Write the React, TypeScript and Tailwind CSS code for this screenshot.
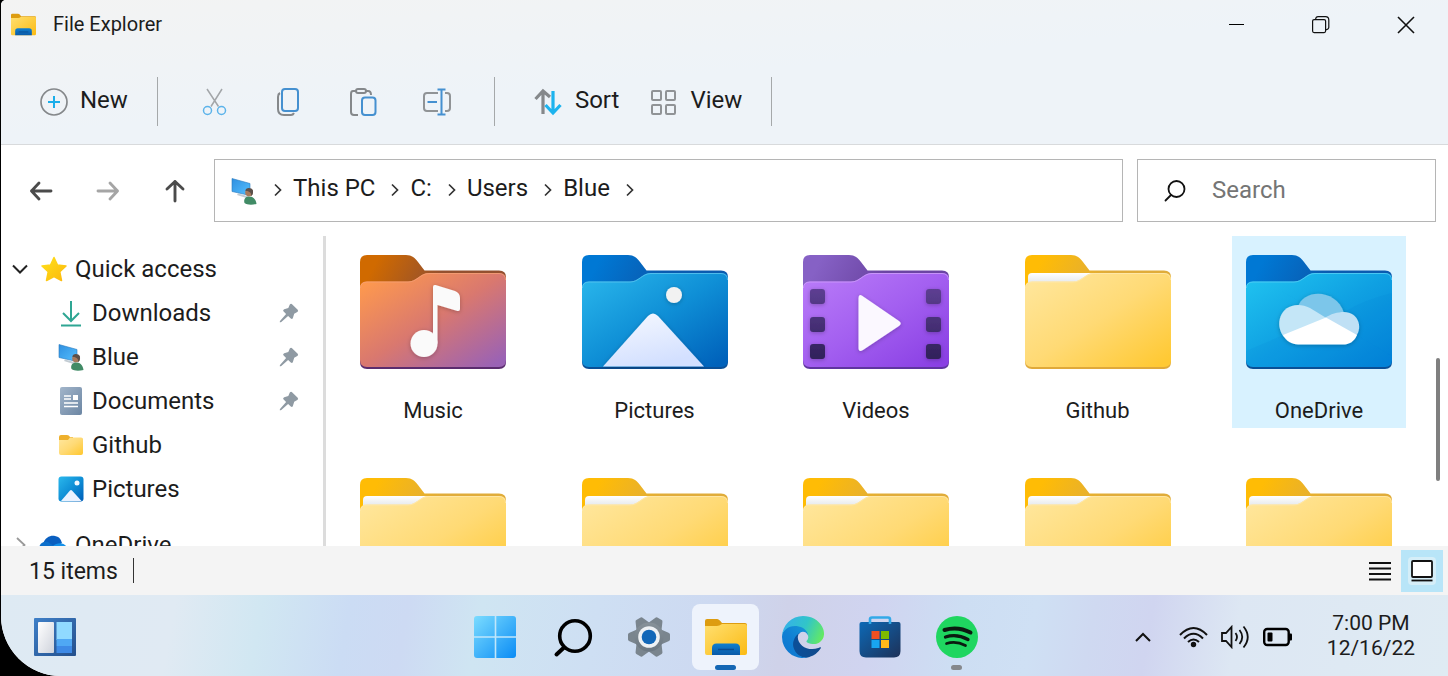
import type { ReactNode } from "react";

type FolderKind = "music" | "pictures" | "videos" | "plain" | "onedrive";

interface Shade {
  back: [string, string];
  front: [string, string, string];
  edge: string;
  rim: string;
}

const shades: Record<FolderKind, Shade> = {
  music: {
    back: ["#d06a00", "#94502f"],
    front: ["#ff9a4d", "#d9786f", "#9a62b5"],
    edge: "#5b2c6e",
    rim: "#f5a077",
  },
  pictures: {
    back: ["#0078d4", "#0a5bb0"],
    front: ["#28b4ea", "#0f8fd6", "#0062bb"],
    edge: "#0a4f96",
    rim: "#5cc6f0",
  },
  videos: {
    back: ["#8661c5", "#6b45a3"],
    front: ["#b87af8", "#a35ff0", "#8a40e4"],
    edge: "#5f35a0",
    rim: "#cf9ffb",
  },
  plain: {
    back: ["#ffbc05", "#e0ac3a"],
    front: ["#ffe69b", "#ffda75", "#ffc934"],
    edge: "#e0a93a",
    rim: "#ffe9ae",
  },
  onedrive: {
    back: ["#0078d4", "#0a5bb0"],
    front: ["#1fc1ef", "#0fa0e2", "#0384d8"],
    edge: "#0a4f96",
    rim: "#58d0f5",
  },
};

function FolderArt({ kind }: { kind: FolderKind }) {
  if (kind === "music") {
    return (
      <g fill="#fafafa">
        <circle cx="64" cy="88.500" r="13.500" />
        <path d="M73 32Q73 29.500 75.500 30L95 36Q100 38 100 43V54Q100 56.500 97.500 56L77.500 50V88.500H73Z" />
      </g>
    );
  }
  if (kind === "pictures") {
    return (
      <g>
        <circle cx="92" cy="40" r="8" fill="#f2f2f2" />
        <path
          d="M21 111.500L66 61Q71 56 76 61L122 111.500Z"
          fill="url(#mountain)"
        />
      </g>
    );
  }
  if (kind === "videos") {
    return (
      <g>
        <path
          d="M7 37q0-3 3-3h9q3 0 3 3v9q0 3-3 3h-9q-3 0-3-3zM7 65q0-3 3-3h9q3 0 3 3v9q0 3-3 3h-9q-3 0-3-3zM7 92q0-3 3-3h9q3 0 3 3v9q0 3-3 3h-9q-3 0-3-3zM123 37q0-3 3-3h9q3 0 3 3v9q0 3-3 3h-9q-3 0-3-3zM123 65q0-3 3-3h9q3 0 3 3v9q0 3-3 3h-9q-3 0-3-3zM123 92q0-3 3-3h9q3 0 3 3v9q0 3-3 3h-9q-3 0-3-3z"
          fill="url(#film)"
        />
        <path
          d="M55.500 43Q55.500 38.500 59.500 41L96 66Q99.500 68.500 96 71L60 95Q55.500 97.500 55.500 93Z"
          fill="#fbf8ff"
        />
      </g>
    );
  }
  if (kind === "onedrive") {
    return (
      <g>
        <path d="M52 52C57 34 90 33 98 58L80 66Z" fill="#7cc6ea" />
        <path d="M38 82C28 70 34 50 52 50C56 50 60 51 64 53L82 64Z" fill="#c4e6f7" />
        <path d="M79 63C84 59 92 57 98 57C112 57 117 72 110 81Z" fill="#bfe0f5" />
        <path d="M37 80L80 62.500L111 80C108 87 103 89.500 97 89.500H52C46 89.500 40 86 37 80Z" fill="#fff" />
      </g>
    );
  }
  return null;
}

function Folder({ kind }: { kind: FolderKind }) {
  const s = shades[kind];
  return (
    <svg viewBox="0 0 146 114" className="h-[114px] w-[146px]" aria-hidden="true">
      <defs>
        <linearGradient id={`back-${kind}`} gradientUnits="userSpaceOnUse" x1="20" y1="0" x2="75" y2="30">
          <stop offset="0" stopColor={s.back[0]} />
          <stop offset="1" stopColor={s.back[1]} />
        </linearGradient>
        <linearGradient id={`front-${kind}`} x1="0" y1="0.100" x2="0.900" y2="1">
          <stop offset="0" stopColor={s.front[0]} />
          <stop offset="0.500" stopColor={s.front[1]} />
          <stop offset="1" stopColor={s.front[2]} />
        </linearGradient>
        <linearGradient id="mountain" x1="0" y1="0" x2="0.400" y2="1">
          <stop offset="0" stopColor="#f7f9ff" />
          <stop offset="1" stopColor="#d3e0ff" />
        </linearGradient>
        <linearGradient id="film" x1="0" y1="0" x2="0" y2="1">
          <stop offset="0" stopColor="#5d3f92" />
          <stop offset="1" stopColor="#30205a" />
        </linearGradient>
        <linearGradient id="paper" x1="0" y1="0" x2="0" y2="1">
          <stop offset="0" stopColor="#ffffff" />
          <stop offset="1" stopColor="#dfe3e6" />
        </linearGradient>
        <filter id="soft" x="-20%" y="-20%" width="140%" height="140%">
          <feDropShadow dx="0" dy="1" stdDeviation="2" floodOpacity="0.250" />
        </filter>
      </defs>
      <path
        d="M0 7Q0 0 7 0H46C52 0 55 3 58 7L64.500 15.500H139Q146 15.500 146 22V60H0Z"
        fill={`url(#back-${kind})`}
      />
      <path d="M0 90H146V107Q146 114 139 114H7Q0 114 0 107Z" fill={s.edge} />
      {kind === "plain" && (
        <path d="M3 22Q3 18 7 18H69L60 30H3Z" fill="url(#paper)" />
      )}
      <path
        d="M0 33Q0 26.500 7 26.500H48C57 26.500 60 18 69 18H139Q146 18 146 25V105Q146 112 139 112H7Q0 112 0 105Z"
        fill={`url(#front-${kind})`}
      />
      {kind === "onedrive" && (
        <g>
          <path d="M20 27L146 101V105Q146 112 139 112H7Q0 112 0 105V96L80 62Z" fill="#0078d4" opacity="0.100" />
          <path d="M98 57Q120 44 146 38V101L80 62Z" fill="#0078d4" opacity="0.120" />
        </g>
      )}
      <path
        d="M0.500 33Q0.500 27 7 27H48C57 27 60 18.500 69 18.500H139Q145.500 18.500 145.500 25"
        fill="none"
        stroke={s.rim}
        strokeWidth="1"
        opacity="0.800"
      />
      <g filter="url(#soft)">
        <FolderArt kind={kind} />
      </g>
    </svg>
  );
}

function ExplorerIcon({ className }: { className: string }) {
  return (
    <svg viewBox="0 0 42 42" className={className} aria-hidden="true">
      <defs>
        <linearGradient id="exp-body" x1="0" y1="0" x2="1" y2="1">
          <stop offset="0" stopColor="#ffdf70" />
          <stop offset="1" stopColor="#fbbb14" />
        </linearGradient>
        <linearGradient id="exp-dock" x1="0" y1="0" x2="0" y2="1">
          <stop offset="0" stopColor="#0f7fd0" />
          <stop offset="1" stopColor="#0a5aa8" />
        </linearGradient>
      </defs>
      <path d="M0 5Q0 3 2 3H12Q14 3 17 7H40Q42 7 42 9V20H0Z" fill="#dd9c10" />
      <path d="M0 10H12Q14 10 17 8H40Q42 8 42 10V37Q42 39 40 39H2Q0 39 0 37Z" fill="url(#exp-body)" />
      <path d="M7 39V32Q7 27.500 11.500 27.500H30.500Q35 27.500 35 32V39Z" fill="url(#exp-dock)" />
      <path d="M13 33.500H29" stroke="#084c94" strokeWidth="1.500" />
    </svg>
  );
}

function UserPcIcon() {
  return (
    <svg viewBox="0 0 26 28" className="h-7 w-[26px]" aria-hidden="true">
      <defs>
        <linearGradient id="pc-screen" x1="0" y1="0" x2="1" y2="1">
          <stop offset="0" stopColor="#2f8fe0" />
          <stop offset="1" stopColor="#55c0ff" />
        </linearGradient>
      </defs>
      <path d="M7 16.500L18 19.500L17 21.500L6 18Z" fill="#c3ccd3" />
      <path d="M1 1.500L19 6.500V18.500L1 14.500Z" fill="url(#pc-screen)" stroke="#2a7bbd" strokeWidth="0.600" />
      <path d="M13.500 26C12 21 16 19 19 19.500C23 20 25 23 25.500 27C21 28 16 28 13.500 26Z" fill="#418b66" />
      <circle cx="18" cy="15.500" r="3.800" fill="#a87a5d" />
      <path d="M14.500 14C14 10.500 20.500 10 22 13.500C22.500 17 21 18.500 20 19C21 16 18 13.500 14.500 14Z" fill="#5b504a" />
    </svg>
  );
}

function Chevron() {
  return (
    <svg viewBox="0 0 8 14" className="mt-1 h-[14px] w-2" fill="none" stroke="#333" strokeWidth="1.700" aria-hidden="true">
      <path d="M1 1.500L6.500 7L1 12.500" />
    </svg>
  );
}

function NavArrow({ d, color }: { d: string; color: string }) {
  return (
    <svg viewBox="0 0 24 24" className="h-6 w-6" fill="none" stroke={color} strokeWidth="2.900" strokeLinecap="round" strokeLinejoin="round" aria-hidden="true">
      <path d={d} />
    </svg>
  );
}

function Pin() {
  return (
    <svg viewBox="0 0 20 20" className="h-5 w-5" fill="#8f9aa3" aria-hidden="true">
      <path d="M10.800 1.500Q12 0.300 13.300 1.400L18.700 6.800Q19.800 8.200 18.300 9.100L15.200 10.800L13.900 15Q13.200 16.800 11.800 15.600L9.100 13L2.300 19Q1.200 19.500 0.800 19.200Q0.500 18.800 1.200 17.700L7.100 11L4.600 8.400Q3.300 7 5.200 6.300L9.300 5Z" />
    </svg>
  );
}

function TitleBar() {
  return (
    <header className="flex h-12 items-center justify-between pl-[10px]">
      <div className="flex items-center">
        <ExplorerIcon className="h-[25px] w-[25px]" />
        <h1 className="ml-[17px] text-[20px] leading-6">File Explorer</h1>
      </div>
      <div className="flex h-full pt-px">
        <button aria-label="Minimize" className="flex w-[85px] items-center justify-center">
          <svg viewBox="0 0 18 18" className="h-[18px] w-[18px]" stroke="#000" aria-hidden="true">
            <path d="M2 8.500H17" />
          </svg>
        </button>
        <button aria-label="Restore" className="flex w-[85px] items-center justify-center">
          <svg viewBox="0 0 18 18" className="h-[18px] w-[18px]" fill="none" stroke="#111" strokeWidth="1.200" aria-hidden="true">
            <rect x="0.600" y="3.600" width="13" height="13" rx="1.500" />
            <path d="M3.600 3.600V3Q4 0.600 6 0.600H13.500Q16.800 0.600 16.800 4V11.500Q16.500 13.500 13.600 13.800" />
          </svg>
        </button>
        <button aria-label="Close" className="flex w-[85px] items-center justify-center">
          <svg viewBox="0 0 18 18" className="h-[18px] w-[18px]" stroke="#111" strokeWidth="1.600" aria-hidden="true">
            <path d="M1 1L17 17M17 1L1 17" />
          </svg>
        </button>
      </div>
    </header>
  );
}

function Divider() {
  return <div className="h-[49px] w-px bg-[#a5a8aa]" />;
}

function Toolbar() {
  const icon = "h-7 w-7";
  return (
    <div className="flex h-[97px] items-center border-b border-[#d8dadc] text-[24px] leading-7">
      <div className="mt-[11px] flex items-center">
        <button className="ml-[39px] mr-[29px] flex items-center">
          <svg viewBox="0 0 28 28" className={icon} fill="none" strokeWidth="1.700" aria-hidden="true">
            <circle cx="14" cy="14" r="13" stroke="#85888b" />
            <path d="M14 8V20M8 14H20" stroke="#1aaeea" strokeWidth="2" />
          </svg>
          <span className="-mt-1 ml-3">New</span>
        </button>
        <Divider />
        <div className="mx-[43px] flex gap-[46px]">
          <button aria-label="Cut">
            <svg viewBox="0 0 28 28" className={icon} fill="none" strokeWidth="1.500" aria-hidden="true">
              <path d="M6 1L17.500 18.500M21 1L10 18.500" stroke="#a3a6a9" />
              <circle cx="6.500" cy="22.500" r="4" stroke="#5cb3ea" />
              <circle cx="20.500" cy="22.500" r="4" stroke="#5cb3ea" />
            </svg>
          </button>
          <button aria-label="Copy">
            <svg viewBox="0 0 28 28" className={icon} fill="none" strokeWidth="2" aria-hidden="true">
              <path d="M5 5Q3 6 3 9V21Q3 27 9 27H16Q18 27 19 25" stroke="#85888b" />
              <rect x="7" y="1" width="16" height="22" rx="3" stroke="#4590d0" />
            </svg>
          </button>
          <button aria-label="Paste">
            <svg viewBox="0 0 28 28" className={icon} fill="none" strokeWidth="2" aria-hidden="true">
              <path d="M7 3H4Q2 3 2 6V24Q2 27 5 27H9M17 3H19Q22 3 22 7" stroke="#85888b" />
              <rect x="7" y="1" width="10" height="4" rx="2" stroke="#85888b" />
              <rect x="13" y="9.500" width="13.500" height="17.500" rx="3" stroke="#4590d0" />
            </svg>
          </button>
          <button aria-label="Rename">
            <svg viewBox="0 0 28 28" className={icon} fill="none" strokeWidth="2" aria-hidden="true">
              <path d="M15 5H4Q1 5 1 8V20Q1 23 4 23H15M22 5H24Q27 5 27 8V20Q27 23 24 23H22" stroke="#909396" />
              <path d="M18.500 2V26M14.500 1.500H22.500M14.500 26.500H22.500M4.500 14H14" stroke="#4590d0" />
            </svg>
          </button>
        </div>
        <Divider />
        <button className="ml-[39px] flex items-center">
          <svg viewBox="0 0 28 28" className={icon} fill="none" strokeWidth="3.200" aria-hidden="true">
            <path d="M9 26V3M1.500 11L9 3L16 9" stroke="#85888b" />
            <path d="M19 3V25M11.500 17L19 25L26.500 17" stroke="#1cb3ee" />
          </svg>
          <span className="-mt-1 ml-[13px]">Sort</span>
        </button>
        <button className="ml-[31px] mr-[29px] flex items-center">
          <svg viewBox="0 0 28 28" className={icon} fill="none" stroke="#909396" strokeWidth="2" aria-hidden="true">
            <rect x="2" y="3" width="9" height="9" rx="1" />
            <rect x="16" y="3" width="9" height="9" rx="1" />
            <rect x="2" y="17" width="9" height="9" rx="1" />
            <rect x="16" y="17" width="9" height="9" rx="1" />
          </svg>
          <span className="-mt-1 ml-3">View</span>
        </button>
        <Divider />
      </div>
    </div>
  );
}

const crumbs = ["This PC", "C:", "Users", "Blue"];

function AddressRow() {
  return (
    <div className="flex h-[91px] shrink-0 items-center bg-white pr-3 text-[24px] leading-7">
      <div className="flex w-[213px] shrink-0 items-center gap-[43px] pl-7">
        <button aria-label="Back">
          <NavArrow d="M22 12H2.500M10 4L2.500 12L10 20" color="#4b4b4b" />
        </button>
        <button aria-label="Forward">
          <NavArrow d="M2 12H21.500M14 4L21.500 12L14 20" color="#a5a5a5" />
        </button>
        <button aria-label="Up">
          <NavArrow d="M12 22V2.500M4 10L12 2.500L20 10" color="#4b4b4b" />
        </button>
      </div>
      <nav aria-label="Address" className="flex h-[63px] min-w-0 flex-1 items-center border border-[#b5b5b5] pl-4">
        <UserPcIcon />
        <div className="flex items-center pb-[5px] pl-[17px]">
          <Chevron />
          {crumbs.map((name) => (
            <div key={name} className="flex items-center">
              <button className="ml-[11px] mr-4 whitespace-nowrap">{name}</button>
              <Chevron />
            </div>
          ))}
        </div>
      </nav>
      <label className="ml-[14px] flex h-[63px] w-[299px] items-center border border-[#b5b5b5] pl-[26px]">
        <svg viewBox="0 0 22 22" className="h-[22px] w-[22px] shrink-0" fill="none" stroke="#111" strokeWidth="1.800" strokeLinecap="round" aria-hidden="true">
          <circle cx="12.500" cy="9" r="8" />
          <path d="M7 15L1.500 20.500" />
        </svg>
        <input
          type="search"
          aria-label="Search"
          placeholder="Search"
          className="ml-[26px] w-full min-w-0 bg-transparent pb-0.5 outline-none placeholder:text-[#757575]"
        />
      </label>
    </div>
  );
}

function DownloadIcon() {
  return (
    <svg viewBox="0 0 26 28" className="h-7 w-[26px]" fill="none" stroke="#2fa693" strokeWidth="2" aria-hidden="true">
      <path d="M13 2V21M5 14L13 22L21 14M3 26.500H23" />
    </svg>
  );
}

function DocumentIcon() {
  return (
    <svg viewBox="0 0 26 28" className="h-7 w-[26px]" aria-hidden="true">
      <defs>
        <linearGradient id="doc" x1="0" y1="0" x2="1" y2="1">
          <stop offset="0" stopColor="#a2b5ca" />
          <stop offset="1" stopColor="#6c86a3" />
        </linearGradient>
      </defs>
      <rect x="2" y="0" width="22" height="28" rx="2" fill="url(#doc)" />
      <path d="M6 9H13M6 12H13M6 16H20M6 19.500H20" stroke="#fff" strokeWidth="1.700" />
      <rect x="15" y="8" width="5" height="5" fill="#fff" />
    </svg>
  );
}

function SmallFolderIcon() {
  return (
    <svg viewBox="0 0 26 28" className="h-7 w-[26px]" aria-hidden="true">
      <path d="M1 6Q1 4 3 4H9Q11 4 12 6H15V12H1Z" fill="#eeb02c" />
      <path d="M1 9H10L12 6.500H23Q25 6.500 25 8V22Q25 24 23 24H3Q1 24 1 22Z" fill="url(#front-plain)" />
    </svg>
  );
}

function SmallPicturesIcon() {
  return (
    <svg viewBox="0 0 26 26" className="h-[26px] w-[26px]" aria-hidden="true">
      <rect x="0.500" y="0.500" width="25" height="25" rx="3" fill="url(#front-pictures)" />
      <circle cx="19" cy="7" r="2.500" fill="#f2f8ff" />
      <path d="M3 25L12 14.500Q13 13.500 14 14.500L23.500 25Z" fill="#eaf2ff" />
    </svg>
  );
}

interface SideItem {
  name: string;
  icon: ReactNode;
  pinned?: boolean;
}

const sideItems: SideItem[] = [
  { name: "Downloads", icon: <DownloadIcon />, pinned: true },
  { name: "Blue", icon: <UserPcIcon />, pinned: true },
  { name: "Documents", icon: <DocumentIcon />, pinned: true },
  { name: "Github", icon: <SmallFolderIcon /> },
  { name: "Pictures", icon: <SmallPicturesIcon /> },
];

function Sidebar() {
  return (
    <aside className="w-[325px] shrink-0 overflow-hidden border-r-[3px] border-[#dcdcdc] pt-[11px] text-[24px] leading-7">
      <button className="flex h-11 w-full items-center pl-[11px]">
        <svg viewBox="0 0 16 10" className="h-[10px] w-4" fill="none" stroke="#222" strokeWidth="2" aria-hidden="true">
          <path d="M1 1.500L8 8.500L15 1.500" />
        </svg>
        <svg viewBox="0 0 26 26" className="ml-[13px] h-[26px] w-[26px]" aria-hidden="true">
          <defs>
            <linearGradient id="star" x1="0" y1="0" x2="1" y2="1">
              <stop offset="0" stopColor="#ffe11a" />
              <stop offset="1" stopColor="#fcb80d" />
            </linearGradient>
          </defs>
          <path
            d="M13 1.500L16.500 9L25 10L18.800 15.800L20.500 24.500L13 20.500L5.500 24.500L7.200 15.800L1 10L9.500 9Z"
            fill="url(#star)"
            stroke="url(#star)"
            strokeWidth="1.500"
            strokeLinejoin="round"
          />
        </svg>
        <span className="ml-2">Quick access</span>
      </button>
      <ul>
        {sideItems.map((item) => (
          <li key={item.name}>
            <button className="flex h-11 w-full items-center pl-[57px] pr-6">
              {item.icon}
              <span className="ml-2 flex-1 text-left">{item.name}</span>
              {item.pinned && <Pin />}
            </button>
          </li>
        ))}
      </ul>
      <button className="mt-3 flex h-11 w-full items-center pl-[15px]">
        <svg viewBox="0 0 10 16" className="h-4 w-[10px]" fill="none" stroke="#999" strokeWidth="1.800" aria-hidden="true">
          <path d="M1 1L8.500 8L1 15" />
        </svg>
        <svg viewBox="0 0 28 20" className="ml-[13px] h-5 w-7" aria-hidden="true">
          <path d="M4 9C6 2 12 0 16 1C21 2 22 5 23 8L14 14Z" fill="#0a5fc0" />
          <path d="M0 14C0 8 5 6 9 7L22 16L7 20C3 20 0 18 0 14Z" fill="#0c6fcb" />
          <path d="M14 11C19 6 28 8 28 14C28 18 25 20 22 20H7Z" fill="#1490e8" />
        </svg>
        <span className="ml-2">OneDrive</span>
      </button>
    </aside>
  );
}

interface Tile {
  name: string;
  kind: FolderKind;
  selected?: boolean;
}

const tiles: Tile[] = [
  { name: "Music", kind: "music" },
  { name: "Pictures", kind: "pictures" },
  { name: "Videos", kind: "videos" },
  { name: "Github", kind: "plain" },
  { name: "OneDrive", kind: "onedrive", selected: true },
];

function FileGrid() {
  return (
    <main className="relative min-w-0 flex-1 overflow-hidden pl-5 pr-[42px]">
      <div className="grid grid-cols-[repeat(5,174px)] justify-between gap-y-[31px]">
        {tiles.map((tile) => (
          <button
            key={tile.name}
            className={`flex h-48 flex-col items-center pt-[19px] text-[22px] leading-7 ${tile.selected ? "bg-[#d8f2ff]" : ""}`}
          >
            <Folder kind={tile.kind} />
            <span className="mt-7">{tile.name}</span>
          </button>
        ))}
        {tiles.map((tile) => (
          <button key={`next-${tile.name}`} aria-label="Folder" className="flex h-48 flex-col items-center pt-[19px]">
            <Folder kind="plain" />
          </button>
        ))}
      </div>
      <div className="absolute right-2 top-[122px] h-[123px] w-1 rounded-full bg-[#7f7f7f]" />
    </main>
  );
}

function StatusBar() {
  return (
    <footer className="flex h-[49px] shrink-0 items-center bg-[#f4f4f4] pl-7 pr-[5px] text-[23px] leading-7">
      <span className="pt-0.5">15 items</span>
      <div className="ml-[15px] h-[25px] w-px bg-[#333]" />
      <button aria-label="Details view" className="ml-auto flex h-[42px] w-[42px] items-center justify-center">
        <svg viewBox="0 0 22 20" className="h-5 w-[22px]" stroke="#111" strokeWidth="1.800" aria-hidden="true">
          <path d="M0 2H22M0 7.500H22M0 13H22M0 18.500H22" />
        </svg>
      </button>
      <button aria-label="Large icons view" aria-pressed="true" className="flex h-[42px] w-[42px] items-center justify-center bg-[#b8e5f8]">
        <span className="flex h-7 w-7 items-center justify-center rounded bg-[#d5eef8]">
          <svg viewBox="0 0 22 22" className="h-[22px] w-[22px]" fill="#fff" stroke="#111" strokeWidth="1.800" aria-hidden="true">
            <rect x="1" y="1" width="20" height="16" rx="1" />
            <path d="M0.500 20.500H21.500" />
          </svg>
        </span>
      </button>
    </footer>
  );
}

function WidgetsIcon() {
  return (
    <svg viewBox="0 0 42 38" className="h-[38px] w-[42px]" aria-hidden="true">
      <defs>
        <linearGradient id="wd" x1="0" y1="0" x2="1" y2="1">
          <stop offset="0" stopColor="#3f80c8" />
          <stop offset="1" stopColor="#24508c" />
        </linearGradient>
        <linearGradient id="wd-l" x1="0" y1="0" x2="1" y2="1">
          <stop offset="0" stopColor="#ffffff" />
          <stop offset="1" stopColor="#cfd3dc" />
        </linearGradient>
      </defs>
      <rect width="42" height="38" rx="1" fill="url(#wd)" />
      <rect x="4" y="4" width="16" height="31" rx="1" fill="url(#wd-l)" />
      <rect x="22.500" y="4" width="15.500" height="18" fill="#90daff" />
      <rect x="22.500" y="21" width="15.500" height="7" fill="#4fa8f4" />
      <rect x="22.500" y="28" width="15.500" height="7" fill="#3e8ae6" />
    </svg>
  );
}

function StartIcon() {
  return (
    <svg viewBox="0 0 42 42" className="h-[42px] w-[42px]" aria-hidden="true">
      <defs>
        <linearGradient id="start" x1="0" y1="0" x2="1" y2="1">
          <stop offset="0" stopColor="#7bdcff" />
          <stop offset="1" stopColor="#0a8cf5" />
        </linearGradient>
      </defs>
      <rect width="42" height="42" rx="3" fill="url(#start)" />
      <path d="M21.500 0V42M0 21H42" stroke="#bfe6fb" strokeWidth="1.600" />
    </svg>
  );
}

function SearchIcon() {
  return (
    <svg viewBox="0 0 42 42" className="h-[42px] w-[42px]" fill="none" stroke="#000" strokeLinecap="round" aria-hidden="true">
      <circle cx="24" cy="20" r="15.300" strokeWidth="3.600" />
      <path d="M13 31.500L5.500 38.500" strokeWidth="4" />
    </svg>
  );
}

function SettingsIcon() {
  const teeth = [30, 90, 150, 210, 270, 330];
  return (
    <svg viewBox="0 0 42 42" className="h-[42px] w-[42px]" aria-hidden="true">
      <defs>
        <linearGradient id="gear" gradientUnits="userSpaceOnUse" x1="0" y1="0" x2="0" y2="42">
          <stop offset="0" stopColor="#8d979e" />
          <stop offset="1" stopColor="#65717c" />
        </linearGradient>
      </defs>
      <g fill="#7a858e">
        {teeth.map((a) => (
          <path key={a} d="M13.500 9L16.800 1.500Q17.200 0 18.500 0H23.500Q24.800 0 25.200 1.500L28.500 9Z" transform={`rotate(${a} 21 21)`} />
        ))}
      </g>
      <circle cx="21" cy="21" r="14.600" fill="url(#gear)" />
      <circle cx="21" cy="21" r="10.800" fill="#eef1f4" />
      <circle cx="21" cy="21" r="7.300" fill="#1267b8" />
    </svg>
  );
}

function EdgeIcon() {
  return (
    <svg viewBox="0 0 256 256" className="h-[42px] w-[42px]" aria-hidden="true">
      <defs>
        <linearGradient id="edge-a" x1="0.200" y1="0.500" x2="1" y2="0.500">
          <stop offset="0" stopColor="#0c4f98" />
          <stop offset="1" stopColor="#114a8b" />
        </linearGradient>
        <linearGradient id="edge-b" x1="0.800" y1="0.200" x2="0.200" y2="0.900">
          <stop offset="0" stopColor="#1590d6" />
          <stop offset="0.500" stopColor="#1080d4" />
          <stop offset="1" stopColor="#0f78d0" />
        </linearGradient>
        <linearGradient id="edge-c" x1="0" y1="0.400" x2="1" y2="0.700">
          <stop offset="0" stopColor="#35b1e8" />
          <stop offset="0.500" stopColor="#31c5c9" />
          <stop offset="1" stopColor="#66eb5e" />
        </linearGradient>
      </defs>
      <path fill="url(#edge-a)" d="M231 190.500c-3.400 1.800-6.900 3.400-10.500 4.700a101.500 101.500 0 0 1-35.900 6.500c-47.300 0-88.500-32.500-88.500-74.300a31.500 31.500 0 0 1 16.400-27.300c-42.800 1.800-53.800 46.400-53.800 72.500 0 74 68.100 81.400 82.800 81.400 7.900 0 19.800-2.300 27-4.600l1.300-.4a128.300 128.300 0 0 0 66.600-52.800 4 4 0 0 0-5.400-5.700Z" />
      <path fill="url(#edge-b)" d="M105.700 241.400a79.200 79.200 0 0 1-22.700-21.300 80.700 80.700 0 0 1 29.500-120c3.200-1.500 8.500-4.100 15.600-4a32.400 32.400 0 0 1 25.700 13 31.900 31.900 0 0 1 6.300 18.700c0-.2 24.500-79.600-80-79.600-43.900 0-80 41.600-80 78.200a130.200 130.200 0 0 0 12.100 56 128 128 0 0 0 156.400 67 75.500 75.500 0 0 1-62.800-8Z" />
      <path fill="url(#edge-c)" d="M152.300 148.900c-.9 1-3.300 2.500-3.300 5.700 0 2.600 1.700 5.200 4.800 7.300 14.400 10 41.500 8.700 41.600 8.700 10.700 0 21.200-2.900 30.300-8.300a61.400 61.400 0 0 0 30.400-52.900c.3-22.400-8-37.300-11.300-43.900C223.500 23.900 177.700 0 128 0A128 128 0 0 0 0 126.200c.5-36.500 36.800-66 80-66 3.500 0 23.500.3 42 10 16.300 8.600 24.900 19 30.800 29.200 6.200 10.700 7.300 24.200 7.300 29.500 0 5.400-2.700 13.400-7.800 20Z" />
    </svg>
  );
}

function StoreIcon() {
  return (
    <svg viewBox="0 0 42 42" className="h-[42px] w-[42px]" aria-hidden="true">
      <defs>
        <linearGradient id="store" x1="0" y1="0" x2="1" y2="1">
          <stop offset="0" stopColor="#0d69b6" />
          <stop offset="1" stopColor="#1d3158" />
        </linearGradient>
      </defs>
      <path d="M0.500 8Q0.500 6 2.500 6H39.500Q41.500 6 41.500 8V35Q41.500 41.500 35 41.500H7Q0.500 41.500 0.500 35Z" fill="url(#store)" />
      <path d="M11 8V3.500Q11 1.500 13 1.500H29Q31 1.500 31 3.500V8" fill="none" stroke="#33a9e8" strokeWidth="2.600" />
      <rect x="12.500" y="15" width="8" height="8" fill="#f25022" />
      <rect x="22" y="15" width="8" height="8" fill="#7fba00" />
      <rect x="12.500" y="24" width="8" height="8" fill="#18a5f0" />
      <rect x="22" y="24" width="8" height="8" fill="#ffb91a" />
    </svg>
  );
}

function SpotifyIcon() {
  return (
    <svg viewBox="0 0 42 42" className="h-[42px] w-[42px]" fill="none" stroke="#0b1a10" strokeLinecap="round" aria-hidden="true">
      <circle cx="21" cy="21" r="21" fill="#1fd660" stroke="none" />
      <path d="M8.500 14Q22 10 34.500 16.500" strokeWidth="4" />
      <path d="M9.500 21Q21 17.500 32 23.500" strokeWidth="3.300" />
      <path d="M10.500 27.500Q20 24.500 29.500 29.500" strokeWidth="2.700" />
    </svg>
  );
}

interface TaskApp {
  name: string;
  icon: ReactNode;
  state?: "active" | "running";
}

const taskApps: TaskApp[] = [
  { name: "Start", icon: <StartIcon /> },
  { name: "Search", icon: <SearchIcon /> },
  { name: "Settings", icon: <SettingsIcon /> },
  { name: "File Explorer", icon: <ExplorerIcon className="h-[42px] w-[42px]" />, state: "active" },
  { name: "Edge", icon: <EdgeIcon /> },
  { name: "Store", icon: <StoreIcon /> },
  { name: "Spotify", icon: <SpotifyIcon />, state: "running" },
];

function Taskbar() {
  return (
    <div className="grid h-[81px] shrink-0 grid-cols-[1fr_auto_1fr] items-center bg-[linear-gradient(100deg,#deeaf3_0%,#e0eaf3_12%,#d1e7f2_18%,#cbdcf4_24%,#cddaf3_28%,#cfe5f2_33%,#cedff3_41%,#cdd9f1_49%,#cfd2e9_54%,#d0d4f0_60%,#cddef3_66%,#cfe0f4_71%,#cfd9f1_75%,#d0d5f0_79%,#dde7f3_85%,#dfebf3_100%)] pb-[6px] pl-0.5 pt-[9px]">
      <button aria-label="Widgets" className="justify-self-start pl-[31px]">
        <WidgetsIcon />
      </button>
      <div className="flex gap-[10px]">
        {taskApps.map((app) => (
          <button
            key={app.name}
            aria-label={app.name}
            className={`relative flex h-[66px] w-[67px] items-center justify-center rounded-lg ${app.state === "active" ? "bg-[#eef3fc]" : ""}`}
          >
            {app.icon}
            {app.state === "active" && (
              <span className="absolute bottom-0 h-[5px] w-[21px] rounded-sm bg-[#1567b4]" />
            )}
            {app.state === "running" && (
              <span className="absolute bottom-0 h-[5px] w-[11px] rounded-sm bg-[#86888c]" />
            )}
          </button>
        ))}
      </div>
      <div className="flex items-center justify-self-end pr-[33px]">
        <button aria-label="Show hidden icons" className="mr-7">
          <svg viewBox="0 0 16 10" className="h-[10px] w-4" fill="none" stroke="#111" strokeWidth="2" aria-hidden="true">
            <path d="M1 9L8 2L15 9" />
          </svg>
        </button>
        <button aria-label="Network, volume and battery" className="flex items-center gap-[13px]">
          <svg viewBox="0 0 29 24" className="h-6 w-[29px]" fill="none" stroke="#111" strokeWidth="2" aria-hidden="true">
            <path d="M1 10Q14.500 -4 28 10M5 13.500Q14.500 4 24 13.500M9 17Q14.500 12 20 17" />
            <circle cx="14.500" cy="19.500" r="2.700" fill="#111" stroke="none" />
          </svg>
          <svg viewBox="0 0 29 24" className="h-6 w-[29px]" fill="none" stroke="#111" strokeWidth="1.800" aria-hidden="true">
            <path d="M1 8H5L10.500 2V22L5 16H1Z" />
            <path d="M14.500 8Q17.500 12 14.500 16M18.500 5Q24 12 18.500 19M22.500 1.500Q31 12 22.500 22.500" />
          </svg>
          <svg viewBox="0 0 29 20" className="h-5 w-[29px]" aria-hidden="true">
            <rect x="1.200" y="2" width="24.500" height="16" rx="3" fill="none" stroke="#000" strokeWidth="2.400" />
            <rect x="4.500" y="5.500" width="5" height="9" rx="1" />
            <rect x="26" y="6.500" width="3" height="7" rx="1" />
          </svg>
        </button>
        <button className="ml-[35px] pb-0.5 text-center text-[21px] leading-[25px]">
          7:00 PM
          <br />
          12/16/22
        </button>
      </div>
    </div>
  );
}

export default function App() {
  return (
    <div className="h-screen min-h-[600px] bg-black pl-px font-[Roboto,sans-serif] text-[#1c1c1c]">
      <div className="flex h-full flex-col overflow-hidden rounded-bl-[60px] rounded-tl-[5px] bg-white">
        <div className="shrink-0 bg-[linear-gradient(175deg,#f3f3f3_0%,#eef3f8_50%)]">
          <TitleBar />
          <Toolbar />
        </div>
        <AddressRow />
        <div className="flex min-h-0 flex-1 bg-white">
          <Sidebar />
          <FileGrid />
        </div>
        <StatusBar />
        <Taskbar />
      </div>
    </div>
  );
}
